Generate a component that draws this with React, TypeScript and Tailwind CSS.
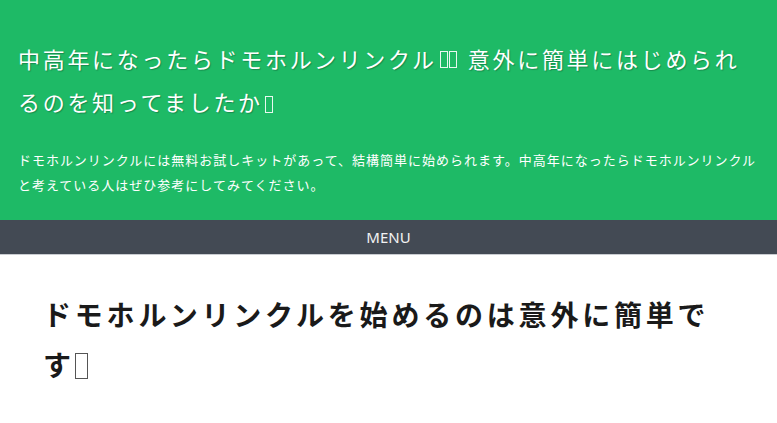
const jp = '"Noto Sans CJK JP", "Noto Sans", sans-serif';

// missing-glyph box, the way the page shows an emoji that the font lacks
function Tofu({ big = false }: { big?: boolean }) {
  return big ? (
    <span className="mr-[3px] inline-block h-[26px] w-[13px] border border-[#555] align-[-3px]" />
  ) : (
    <span className="inline-block h-[17px] w-[8px] border border-white/90 align-[-2px]" />
  );
}

export default function App() {
  return (
    <div className="min-h-[423px] bg-white" style={{ fontFamily: jp }}>
      <header className="bg-[#1eba66] px-[18px] pt-[37px] pb-[23px] text-white">
        <h1 className="text-[22px] font-normal leading-[43px] tracking-[2.7px] [text-shadow:1px_1px_1px_rgba(0,0,0,0.25)]">
          中高年になったらドモホルンリンクル
          <span className="ml-[3px] mr-[11px] inline-flex gap-[1px]">
            <Tofu />
            <Tofu />
          </span>
          意外に簡単にはじめられるのを知ってましたか
          <span className="ml-[2px]">
            <Tofu />
          </span>
        </h1>
        <p className="mt-[24px] text-[13px] leading-[25px] tracking-[1px]">
          ドモホルンリンクルには無料お試しキットがあって、結構簡単に始められます。中高年になったらドモホルンリンクルと考えている人はぜひ参考にしてみてください。
        </p>
      </header>
      <nav className="flex h-[35px] items-center justify-center border-b border-[#c9ccd1] bg-[#434a54]">
        <span className="text-[15px] text-[#f2f2f2]" style={{ fontFamily: '"Noto Sans", sans-serif' }}>
          MENU
        </span>
      </nav>
      <main className="pl-[43px] pr-[50px] pt-[34px]">
        <h2 className="text-[28px] font-bold leading-[50px] tracking-[3.8px] text-[#1a1a1a]">
          ドモホルンリンクルを始めるのは意外に簡単です
          <Tofu big />
        </h2>
      </main>
    </div>
  );
}
